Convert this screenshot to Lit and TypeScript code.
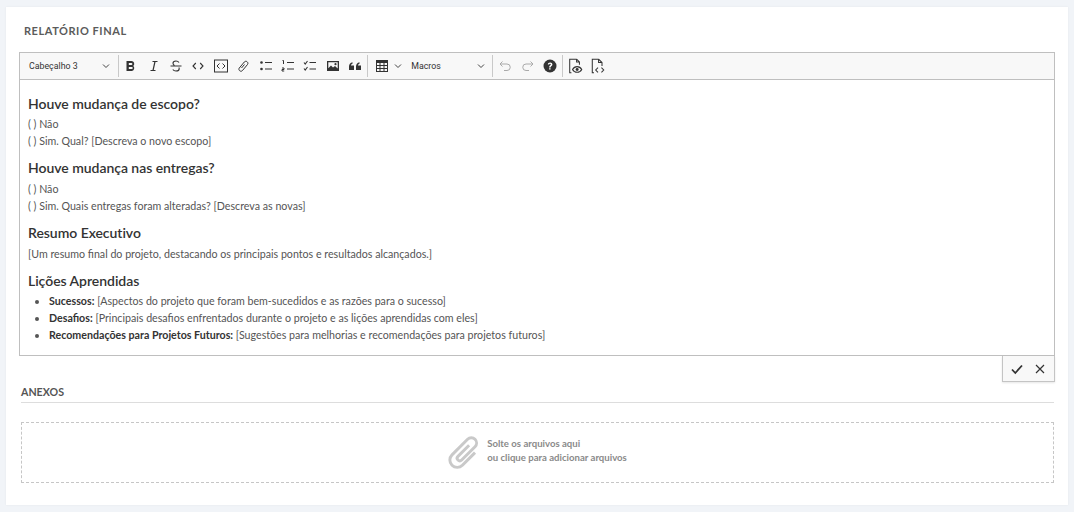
import { LitElement, html, css, svg } from "lit";
import { customElement } from "lit/decorators.js";

const icon = (body: unknown, size = 14) => html`<span class="btn"><svg width=${size} height=${size} viewBox="0 0 14 14">${body}</svg></span>`;
const chev = html`<svg class="chev" width="8" height="8" viewBox="0 0 8 8"><path d="M1 2.500 4 5.500 7 2.500" fill="none" stroke="#444" stroke-width="1"/></svg>`;

@customElement("app-root")
export class AppRoot extends LitElement {
  static styles = css`
    :host { display: block; width: 1074px; height: 512px; background: #f1f4f8; overflow: hidden; font-family: Lato, sans-serif; }
    .card { box-sizing: border-box; margin: 7px 6px 0; width: 1062px; height: 498px; background: #fff; padding: 16px 13px 0; box-shadow: 0 0 2px rgba(0,0,0,.06); }
    .title { font-size: 11px; font-weight: 700; letter-spacing: .55px; color: #5b5b5b; line-height: 16px; margin-bottom: 13px; padding-left: 5px; }
    .editor { border: 1px solid #bfbfbf; width: 1036px; box-sizing: border-box; height: 304px; }
    .toolbar { display: flex; align-items: center; height: 26px; background: #f8f8f8; border-bottom: 1px solid #bfbfbf; color: #333; }
    .select { font-family: Roboto, sans-serif; font-size: 8.8px; color: #333; display: flex; align-items: center; justify-content: space-between; box-sizing: border-box; }
    .heading { width: 97px; padding: 0 7px 0 9px; }
    .macros { width: 87px; padding: 0 6px 0 7px; }
    .sep { width: 1px; height: 22px; background: #c9c9c9; margin: 0 1px; }
    .btn { width: 22.4px; height: 26px; display: flex; align-items: center; justify-content: center; flex: none; }
    .chev { flex: none; }
    .table { width: 18px; margin-left: 4px; }
    .tchev { display: flex; margin-right: 2px; margin-left: 3px; }
    .body { padding: 15px 8px 0; color: #555; font-size: 10.667px; line-height: 17px; background: #fff; }
    h3 { margin: 0 0 3px; font-size: 14px; color: #333; line-height: 18px; font-weight: 600; letter-spacing: -.04px; }
    h3.tight { margin-bottom: 2px; }
    p { margin: 0; }
    .gap { margin-top: 10px; }
    ul { margin: 0; padding: 0 0 0 21px; }
    li { padding: 0; }
    b { color: #333; font-weight: 700; }
    .actions { display: flex; justify-content: flex-end; width: 1036px; }
    .act { display: flex; align-items: center; justify-content: space-around; width: 53px; height: 26px; box-sizing: border-box; background: #f8f8f8; border: 1px solid #c4c4c4; border-top: none; box-shadow: 0 1px 2px rgba(0,0,0,.1); padding: 0 2px; }
    .anexos { font-size: 10.667px; font-weight: 700; color: #555; margin: 2px 0 0 2px; width: 1033px; line-height: 16px; padding-bottom: 2px; border-bottom: 1px solid #ddd; }
    .drop { width: 1033px; height: 61px; margin: 19px 0 0 2px; box-sizing: border-box; border: 1px dashed #c6c6c6; display: flex; align-items: center; justify-content: center; gap: 5px; font-size: 9.6px; font-weight: 700; color: #8a8a8a; line-height: 14px; }
    .drop div { margin-bottom: 4px; }
  `;

  render() {
    return html`<div class="card">
      <div class="title">RELATÓRIO FINAL</div>
      <div class="editor">
        <div class="toolbar">
          <div class="select heading"><span>Cabeçalho 3</span>${chev}</div>
          <span class="sep"></span>
          ${icon(svg`<path d="M2.500 2h5a2.800 2.800 0 0 1 1.800 4.900A3 3 0 0 1 8 12H2.500zM4.800 3.900v2.200h2.500a1.100 1.100 0 0 0 0-2.200zM4.800 7.900v2.200h2.900a1.100 1.100 0 0 0 0-2.200z" fill="#333" fill-rule="evenodd"/>`)}
          ${icon(svg`<path d="M5.500 2.500h5M3.500 11.500h5M8 2.500 6 11.500" fill="none" stroke="#333" stroke-width="1.200"/>`)}
          ${icon(svg`<path d="M1.500 7h11M10 3.500C9.300 2.500 8.200 2 7 2 5.300 2 4 2.900 4 4.300c0 1 .5 1.700 1.500 2.200M9.800 8.500c.3.400.4.800.4 1.200C10.200 11.100 8.900 12 7 12c-1.300 0-2.500-.5-3.200-1.500" fill="none" stroke="#333" stroke-width="1.100"/>`)}
          ${icon(svg`<path d="M4.800 4 2 7l2.800 3M9.200 4 12 7l-2.800 3" fill="none" stroke="#333" stroke-width="1.100"/>`)}
          ${icon(svg`<rect x=".5" y="1" width="13" height="12" fill="none" stroke="#333"/><path d="M5.500 4.500 3 7l2.500 2.500M8.500 4.500 11 7 8.500 9.500" fill="none" stroke="#333"/>`)}
          ${icon(svg`<path d="M8.500 5.500 5.500 9M6.500 11.500l5-6c1.500-2-1.500-4.500-3.200-2.500l-5 6c-1.500 2 1.500 4.500 3.200 2.500z" fill="none" stroke="#333" stroke-width="1"/>`)}
          ${icon(svg`<circle cx="2.500" cy="3.500" r="1.300" fill="#333"/><circle cx="2.500" cy="10" r="1.300" fill="#333"/><path d="M6 3.500h7M6 10h7" stroke="#333" stroke-width="1.200"/>`)}
          ${icon(svg`<path d="M1.500 1.500h1v3.500M1 9h2v1.500H1v1.500h2.200M6 3.500h7M6 10h7" fill="none" stroke="#333" stroke-width="1"/>`)}
          ${icon(svg`<path d="M1 3.500 2.200 5 4.500 2M1 9.500 2.200 11 4.500 8M6.500 3.500h6.500M6.500 10h6.500" fill="none" stroke="#333" stroke-width="1.100"/>`)}
          ${icon(svg`<path d="M1 2h12v10H1zM2.300 3.300v6l2.700-2.800 2 2 2-1.500 2.700 2.500V3.300z" fill="#333" fill-rule="evenodd"/><circle cx="9.500" cy="5.200" r="1.100" fill="#333"/>`)}
          ${icon(svg`<path d="M1 7.500C1 5.200 2.300 3.800 4.500 3.300v1.500C3.500 5.100 3 5.600 3 6.500h3v4.500H1zM8 7.500C8 5.200 9.300 3.800 11.500 3.300v1.500C10.500 5.100 10 5.600 10 6.500h3v4.500H8z" fill="#333"/>`)}
          <span class="sep"></span>
          <span class="btn table"><svg width="14" height="14" viewBox="0 0 14 14"><rect x="1.500" y="1.500" width="11" height="11" fill="none" stroke="#333"/><path d="M1 3h12" stroke="#333" stroke-width="2"/><path d="M1 6.500h12M1 9.500h12M5 3v9M9 3v9" stroke="#333"/></svg></span>
          <span class="tchev">${chev}</span>
          <div class="select macros"><span>Macros</span>${chev}</div>
          <span class="sep"></span>
          ${icon(svg`<path d="M4.500 2.500 2 5l2.500 2.500M2 5h7a3 3 0 0 1 0 6.500H6" fill="none" stroke="#aaa" stroke-width="1"/>`)}
          ${icon(svg`<path d="M9.500 2.500 12 5 9.500 7.500M12 5H5a3 3 0 0 0 0 6.500h3" fill="none" stroke="#aaa" stroke-width="1"/>`)}
          ${icon(svg`<circle cx="7" cy="7" r="6.500" fill="#333"/><path d="M4.800 5.400C5 4.200 5.900 3.500 7.100 3.500c1.300 0 2.300.8 2.300 2 0 1.700-1.800 1.600-1.800 2.900H6.100c0-1.900 1.700-2 1.700-2.900 0-.4-.3-.7-.8-.7-.5 0-.8.300-.9.800zM6.100 9.200h1.500v1.400H6.100z" fill="#fff"/>`)}
          <span class="sep"></span>
          ${icon(svg`<path d="M7.500 1H1.500v12H3M7.500 1l2.500 2.500V6M7.500 1v2.500H10" fill="none" stroke="#333" stroke-width=".9"/><path d="M4 10c1-1.800 2.200-2.500 4-2.500s3 .7 4 2.500c-1 1.800-2.200 2.500-4 2.500S5 11.800 4 10z" fill="none" stroke="#333"/><circle cx="8" cy="10" r="1.300" fill="#333"/>`, 16)}
          ${icon(svg`<path d="M7.500 1H2v12h1.500M7.500 1l3 3v3M7.500 1v3h3" fill="none" stroke="#333" stroke-width=".9"/><path d="M7 8.500 5 10.500l2 2M10 8.500l2 2-2 2" fill="none" stroke="#333" stroke-width=".9"/>`, 16)}
        </div>
        <div class="body">
          <h3 class="tight">Houve mudança de escopo?</h3>
          <p>( ) Não</p>
          <p>( ) Sim. Qual? [Descreva o novo escopo]</p>
          <h3 class="gap">Houve mudança nas entregas?</h3>
          <p>( ) Não</p>
          <p>( ) Sim. Quais entregas foram alteradas? [Descreva as novas]</p>
          <h3 class="gap">Resumo Executivo</h3>
          <p>[Um resumo final do projeto, destacando os principais pontos e resultados alcançados.]</p>
          <h3 class="gap tight">Lições Aprendidas</h3>
          <ul>
            <li><b>Sucessos:</b> [Aspectos do projeto que foram bem-sucedidos e as razões para o sucesso]</li>
            <li><b>Desafios:</b> [Principais desafios enfrentados durante o projeto e as lições aprendidas com eles]</li>
            <li><b>Recomendações para Projetos Futuros:</b> [Sugestões para melhorias e recomendações para projetos futuros]</li>
          </ul>
        </div>
      </div>
      <div class="actions"><div class="act">
        <svg width="12" height="12" viewBox="0 0 12 12"><path d="M1 6.500 4.300 10 11 2.500" fill="none" stroke="#333" stroke-width="1.800"/></svg>
        <svg width="12" height="12" viewBox="0 0 12 12"><path d="M2 2l8 8M10 2l-8 8" fill="none" stroke="#333" stroke-width="1.200"/></svg>
      </div></div>
      <div class="anexos">ANEXOS</div>
      <div class="drop">
        <svg width="34" height="34" viewBox="-17 -17 34 34"><g transform="rotate(45) scale(1.05)"><path d="M-2.500 -8V7a2.500 2.500 0 0 0 5 0V-11a5 5 0 0 0-10 0V10a7 7 0 0 0 14 0V-7" fill="none" stroke="#c9c9c9" stroke-width="2.800"/></g></svg>
        <div>Solte os arquivos aqui<br/>ou clique para adicionar arquivos</div>
      </div>
    </div>`;
  }
}
